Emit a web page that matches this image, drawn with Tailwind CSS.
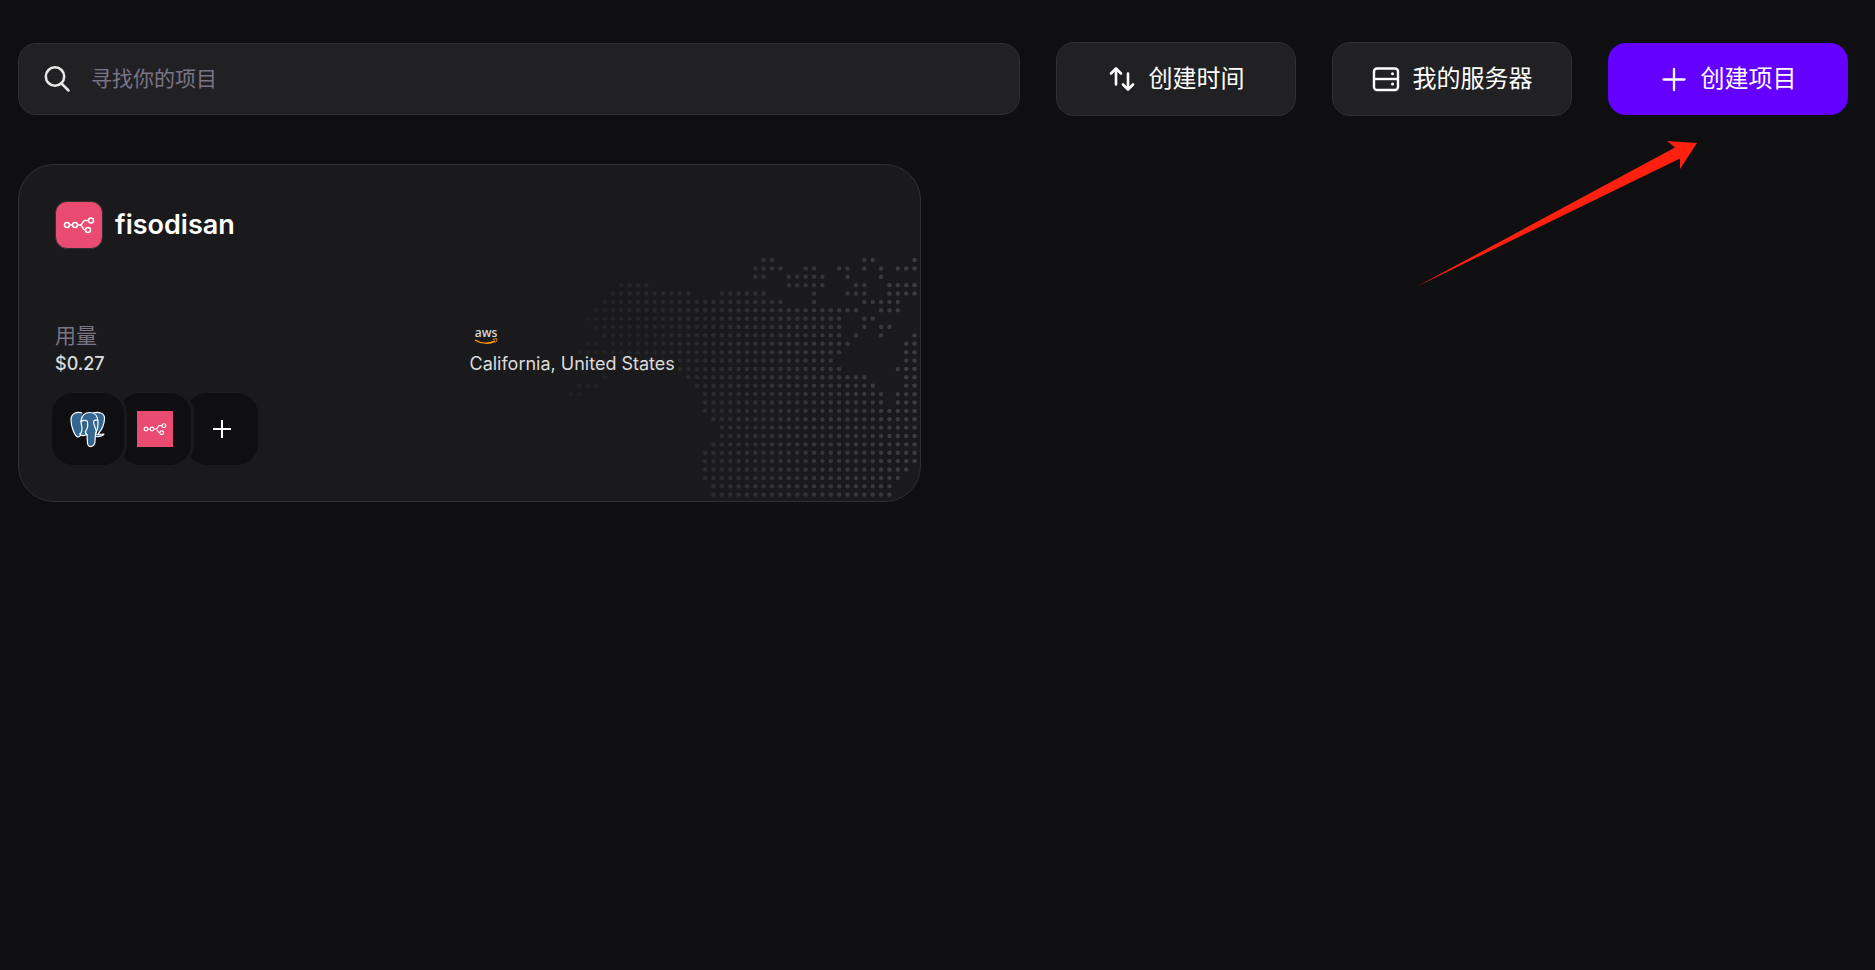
<!DOCTYPE html>
<html lang="zh-CN">
<head>
    <meta charset="UTF-8">
    <meta name="viewport" content="width=device-width, initial-scale=1.0">
    <title>项目</title>
    <script src="https://cdn.jsdelivr.net/npm/@tailwindcss/browser@4"></script>
</head>
<body class="min-h-screen bg-[#0f0f11] text-white font-['Inter','Noto_Sans_CJK_SC',sans-serif]">
    <svg class="hidden" aria-hidden="true">
        <symbol id="n8n" viewBox="0 0 32 18">
            <g fill="none" stroke="#fff" stroke-width="1.5">
                <circle cx="4" cy="9" r="2.5"/>
                <circle cx="12" cy="9" r="2.5"/>
                <circle cx="28" cy="4.5" r="2.5"/>
                <circle cx="25" cy="14" r="2.5"/>
                <path d="M6.5 9h3M14.5 9h2.500c3 0 2-4.500 5-4.500h3.500M17 9c3 0 2 5 5.500 5"/>
            </g>
        </symbol>
    </svg>

    <div class="pl-[18px] pr-[27px] pt-[42px]">
        <header class="flex items-center gap-9">
            <label class="flex flex-1 items-center h-[72px] pl-6 gap-5 rounded-[18px] border border-[#303033] bg-[#212123]">
                <svg class="w-7 h-7 shrink-0" viewBox="0 0 28 28" fill="none" stroke="#e8e8e8" stroke-width="2.5" stroke-linecap="round">
                    <circle cx="12" cy="11.5" r="9.2"/>
                    <path d="M18.500 18.500l7 7"/>
                </svg>
                <input type="text" aria-label="寻找你的项目" placeholder="寻找你的项目" class="flex-1 bg-transparent outline-none text-[21px] placeholder:text-[#7b7486]">
            </label>
            <button class="flex items-center justify-center gap-[13px] w-60 h-[74px] rounded-[18px] border border-[#303033] bg-[#212123] text-2xl">
                <svg class="w-7 h-7" viewBox="0 0 28 28" fill="none" stroke="#fff" stroke-width="2.6" stroke-linecap="round" stroke-linejoin="round">
                    <path d="M8 19.500V4M3 8.500L8 3.500l5 5M20 8.500V24M15 19.500l5 5 5-5"/>
                </svg>
                创建时间
            </button>
            <button class="flex items-center justify-center gap-[13px] w-60 h-[74px] rounded-[18px] border border-[#303033] bg-[#212123] text-2xl">
                <svg class="w-7 h-7" viewBox="0 0 28 28" fill="none" stroke="#fff" stroke-width="2.4">
                    <rect x="2" y="3.5" width="24" height="21.5" rx="3"/>
                    <path d="M2 14h24"/>
                    <path d="M20.500 8.800h.010M20.500 19h.010" stroke-width="3" stroke-linecap="round"/>
                </svg>
                我的服务器
            </button>
            <button class="flex items-center justify-center gap-[13px] w-60 h-[72px] rounded-[18px] bg-[#6300ff] text-2xl">
                <svg class="w-7 h-7" viewBox="0 0 28 28" fill="none" stroke="#fff" stroke-width="2.3" stroke-linecap="round">
                    <path d="M14 4v21M3.500 14.500h21"/>
                </svg>
                创建项目
            </button>
        </header>

        <main class="grid grid-cols-2 gap-6 mt-12">
            <article class="relative overflow-hidden rounded-[36px] border border-[#303033] bg-[#1a1a1c] px-9 pt-9 pb-[33px]">
                <svg id="map" class="absolute right-0 bottom-0" width="354" height="250" viewBox="0 0 354 250"></svg>

                <div class="relative">
                    <div class="flex items-center gap-3">
                        <div class="flex items-center justify-center w-12 h-12 rounded-xl border border-[#303033] bg-[#ea4b71]">
                            <svg class="w-8 h-[18px]"><use href="#n8n"/></svg>
                        </div>
                        <h2 class="text-[27px] leading-9 font-semibold">fisodisan</h2>
                    </div>

                    <div class="grid grid-cols-2 mt-[73px]">
                        <div>
                            <div class="text-[21px] leading-7 text-[#7b7486]">用量</div>
                            <div class="text-lg leading-7 font-medium text-[#dcdcdc]">$0.27</div>
                        </div>
                        <div>
                            <div class="flex items-center h-7 pl-0.5">
                                <svg class="w-7 h-6" viewBox="0 0 28 24" role="img" aria-label="aws">
                                    <text x="14" y="13" text-anchor="middle" font-family="Open Sans" font-size="12" font-weight="600" fill="#d8d8d8">aws</text>
                                    <path d="M3 16c6 4 15 4 20 1" fill="none" stroke="#f90" stroke-width="1.5"/>
                                    <path d="M21 15.500c2-1 4-1 4-.5s-.5 2.500-1.500 3.500" fill="none" stroke="#f90" stroke-width="1"/>
                                </svg>
                            </div>
                            <div class="text-lg leading-7 text-[#dcdcdc]">California, United States</div>
                        </div>
                    </div>

                    <div class="flex mt-3 -ml-1.5">
                        <div class="relative z-20 flex items-center justify-center w-[78px] h-[78px] rounded-3xl border-3 border-[#1a1a1c] bg-[#0f0f11]">
                            <svg class="w-9 h-9" viewBox="0 0 36 36" fill="#336791" stroke="#fff" stroke-width="1.2" stroke-linecap="round" stroke-linejoin="round">
                                <path d="M12 2C7 .5 1 2 1 9c0 5 3 16 7 17 2 0 3.500-3 5-4.500M23 2c5-1.500 12-.5 11.500 6-.3 5-3 11-6 14.500"/>
                                <path d="M18 24c2.500.5 4-1 6-1.500 2 1 7 1 10 .5-1 2-5 3-8 2.500"/>
                                <path d="M11 22c-2.500 1-.5 2 1.500 2.500 2 .3 3.500-.5 4.500-1l.5 9c.5 3 3 3.500 5 2.500 2.500-1 2.500-3 2.500-5l.5-7.500c2-3 2.500-6 2.500-11C28 5 25 1.500 20 1.500c-5 0-8.500 3-9 8.500-.3 4 2.500 7 0 12z"/>
                                <path d="M11 10.500c2-1.500 6-1.500 6.500.5.5 3 .5 6-1.500 8.500-1 1.500-.5 3 1 4M28 9.500c-1.500-1-4.500-.5-4.500 1.500 0 4 4 8 2.500 11" fill="none"/>
                            </svg>
                        </div>
                        <div class="relative z-10 flex items-center justify-center w-[78px] h-[78px] -ml-[11px] rounded-3xl border-3 border-[#1a1a1c] bg-[#0f0f11]">
                            <div class="flex items-center justify-center w-9 h-9 bg-[#ea4b71]">
                                <svg class="w-6 h-[14px]"><use href="#n8n"/></svg>
                            </div>
                        </div>
                        <button aria-label="添加服务" class="flex items-center justify-center w-[78px] h-[78px] -ml-[11px] rounded-3xl border-3 border-[#1a1a1c] bg-[#0f0f11]">
                            <svg class="w-5 h-5" viewBox="0 0 20 20" stroke="#fff" stroke-width="2"><path d="M10 1v18M1 10h18"/></svg>
                        </button>
                    </div>
                </div>
            </article>
        </main>
    </div>

    <svg class="absolute right-[178px] top-[141px]" width="281" height="146" viewBox="0 0 281 146" fill="#ff2010" aria-hidden="true">
        <path d="M0 146L259 6.500 251 0l30 2-17 26V17.500z"/>
    </svg>

    <script>
        // filled columns of the dot map, row by row: [first, last]
        const rows = [
            [[23, 24], [35, 36], [41, 41]],
            [[22, 25], [28, 29], [32, 33], [35, 35], [37, 37], [39, 41]],
            [[22, 23], [26, 30], [33, 33], [37, 37]],
            [[6, 9], [26, 30], [34, 35], [38, 41]],
            [[5, 14], [18, 23], [29, 29], [33, 35], [38, 41]],
            [[4, 25], [29, 29], [35, 39]],
            [[3, 34], [37, 39]],
            [[2, 32], [35, 36]],
            [[3, 32], [35, 35], [37, 38]],
            [[4, 32], [34, 34], [37, 37], [41, 41]],
            [[2, 3], [5, 33], [40, 41]],
            [[1, 32], [40, 41]],
            [[3, 31], [40, 41]],
            [[3, 4], [13, 32], [39, 41]],
            [[4, 4], [14, 35], [40, 41]],
            [[1, 3], [15, 36], [40, 41]],
            [[0, 1], [16, 37], [39, 41]],
            [[16, 37], [39, 41]],
            [[16, 41]],
            [[17, 41]],
            [[18, 41]],
            [[18, 41]],
            [[17, 41]],
            [[16, 41]],
            [[16, 41]],
            [[16, 40]],
            [[16, 39]],
            [[17, 38]],
            [[17, 38]],
        ];
        const step = 8.38;
        const map = document.getElementById('map');

        rows.forEach((runs, row) => {
            runs.forEach(([first, last]) => {
                for (let col = first; col <= last; col++) {
                    const dot = document.createElementNS('http://www.w3.org/2000/svg', 'circle');
                    dot.setAttribute('cx', 5 + col * step);
                    dot.setAttribute('cy', 9 + row * step);
                    dot.setAttribute('r', 2.2);
                    dot.setAttribute('fill', '#fff');
                    dot.setAttribute('fill-opacity', 0.03 + col * 0.003);
                    map.appendChild(dot);
                }
            });
        });
    </script>
</body>
</html>
